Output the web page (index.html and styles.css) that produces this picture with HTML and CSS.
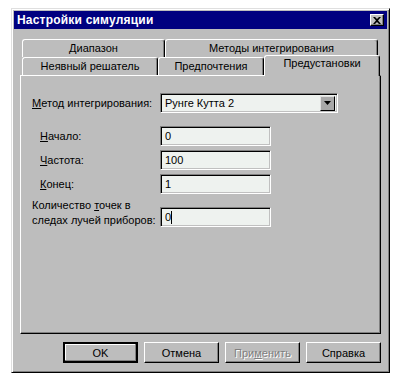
FILE: index.html
```html
<!DOCTYPE html>
<html>
<head>
    <title>Настройки симуляции</title>
    <link rel="stylesheet" href="styles.css">
</head>
<body>
    <div class="dialog">
        <div class="title-bar">
            <span class="title-text">Настройки симуляции</span>
            <span class="close-button">
                <svg width="8" height="7" viewBox="0 0 8 7">
                    <path d="M0 0h2l2 2 2-2h2L5 3.5 8 7H6L4 5 2 7H0l3-3.5z" fill="#000"/>
                </svg>
            </span>
        </div>
        <div class="dialog-body">
            <div class="tab-row back-row">
                <div class="tab tab-range">Диапазон</div>
                <div class="tab tab-methods">Методы интегрирования</div>
            </div>
            <div class="tab-row front-row">
                <div class="tab tab-solver">Неявный решатель</div>
                <div class="tab tab-prefs">Предпочтения</div>
                <div class="tab tab-presets active">Предустановки</div>
            </div>
            <div class="tab-panel">
                <div class="form-row method-row">
                    <label class="field-label"><u>М</u>етод интегрирования:</label>
                    <div class="select-box">
                        <span class="select-value">Рунге Кутта 2</span>
                        <span class="drop-button">
                            <svg width="7" height="4" viewBox="0 0 7 4"><path d="M0 0h7L3.5 4z" fill="#000"/></svg>
                        </span>
                    </div>
                </div>
                <div class="form-row">
                    <label class="field-label indent"><u>Н</u>ачало:</label>
                    <div class="text-input">0</div>
                </div>
                <div class="form-row">
                    <label class="field-label indent"><u>Ч</u>астота:</label>
                    <div class="text-input">100</div>
                </div>
                <div class="form-row">
                    <label class="field-label indent"><u>К</u>онец:</label>
                    <div class="text-input">1</div>
                </div>
                <div class="form-row tall-row">
                    <label class="field-label two-line">Количество <u>т</u>очек в<br>следах лучей приборов:</label>
                    <div class="text-input">0<span class="caret"></span></div>
                </div>
            </div>
            <div class="button-row">
                <button class="dlg-button default-button">OK</button>
                <button class="dlg-button">Отмена</button>
                <button class="dlg-button disabled-button">При<u>м</u>енить</button>
                <button class="dlg-button">Справка</button>
            </div>
        </div>
    </div>
</body>
</html>
```

FILE: styles.css
```css
body {
    margin: 0;
    background-color: #ffffff;
    font-family: "Liberation Sans", Arial, sans-serif;
    font-size: 11px;
    color: #000000;
}
.dialog {
    box-sizing: border-box;
    width: 379px;
    height: 365px;
    margin: 8px 0 0 11px;
    padding: 2px;
    background-color: #bdbdbd;
    border: 1px solid;
    border-color: #dfdfdf #000000 #000000 #dfdfdf;
    box-shadow: inset 1px 1px #ffffff, inset -1px -1px #808080;
}
.title-bar {
    height: 18px;
    background-color: #000080;
    display: flex;
    align-items: center;
    justify-content: space-between;
    padding-left: 3px;
}
.title-text {
    color: #ffffff;
    font-weight: bold;
    font-size: 12px;
    letter-spacing: 0.2px;
}
.close-button {
    box-sizing: border-box;
    width: 14px;
    height: 12px;
    margin-right: 3px;
    background-color: #c0c0c0;
    border: 1px solid;
    border-color: #ffffff #000000 #000000 #ffffff;
    box-shadow: inset -1px -1px #808080;
    display: flex;
    align-items: center;
    justify-content: center;
}
.dialog-body {
    padding: 10px 6px 0 6px;
}
.tab-row {
    display: flex;
    align-items: flex-end;
    height: 18px;
    margin-left: 2px;
}
.tab {
    box-sizing: border-box;
    height: 18px;
    padding-top: 2px;
    text-align: center;
    background-color: #bdbdbd;
    border-top: 1px solid #ffffff;
    border-left: 1px solid #ffffff;
    border-right: 1px solid #000000;
    border-radius: 3px 3px 0 0;
    box-shadow: inset -1px 0 #808080;
}
.tab-range {
    width: 143px;
}
.tab-methods {
    width: 213px;
}
.tab-solver {
    width: 136px;
}
.tab-prefs {
    width: 106px;
}
.tab-presets {
    width: 116px;
}
.tab.active {
    position: relative;
    z-index: 1;
    height: 21px;
    margin-bottom: -1px;
    padding-top: 1px;
}
.tab-panel {
    box-sizing: border-box;
    height: 259px;
    padding: 17px 0 0 11px;
    border: 1px solid;
    border-color: #ffffff #000000 #000000 #ffffff;
    box-shadow: inset -1px -1px #808080;
    display: flex;
    flex-direction: column;
    gap: 4px;
}
.form-row {
    display: flex;
    align-items: center;
}
.method-row {
    margin-bottom: 9px;
}
.tall-row {
    align-items: flex-end;
}
.field-label {
    box-sizing: border-box;
    width: 128px;
    line-height: 14px;
}
.field-label.indent {
    padding-left: 8px;
}
.field-label.two-line {
    line-height: 15px;
    margin-bottom: -1px;
}
.select-box,
.text-input {
    box-sizing: border-box;
    height: 20px;
    background-color: #eef2ef;
    border: 1px solid;
    border-color: #808080 #ffffff #ffffff #808080;
    box-shadow: inset 1px 1px #000000, inset -1px -1px #c0c0c0;
    display: flex;
    align-items: center;
}
.select-box {
    width: 178px;
    justify-content: space-between;
    padding: 0 2px 0 4px;
}
.text-input {
    width: 111px;
    padding-left: 4px;
}
.caret {
    display: inline-block;
    width: 1px;
    height: 13px;
    background-color: #000000;
}
.drop-button {
    box-sizing: border-box;
    width: 15px;
    height: 15px;
    background-color: #a8a8a8;
    border: 1px solid;
    border-color: #dfdfdf #000000 #000000 #dfdfdf;
    display: flex;
    align-items: center;
    justify-content: center;
}
.button-row {
    display: flex;
    justify-content: flex-end;
    gap: 6px;
    margin-top: 8px;
}
.dlg-button {
    box-sizing: border-box;
    width: 75px;
    height: 21px;
    padding: 0;
    font-family: "Liberation Sans", Arial, sans-serif;
    font-size: 11px;
    color: #000000;
    background-color: #bdbdbd;
    border: 1px solid;
    border-color: #ffffff #000000 #000000 #ffffff;
    box-shadow: inset -1px -1px #808080;
}
.default-button {
    border: 2px solid #000000;
    box-shadow: inset -1px -1px #808080, inset 1px 1px #ffffff;
}
.disabled-button {
    color: #808080;
    text-shadow: 1px 1px #ffffff;
}
```
